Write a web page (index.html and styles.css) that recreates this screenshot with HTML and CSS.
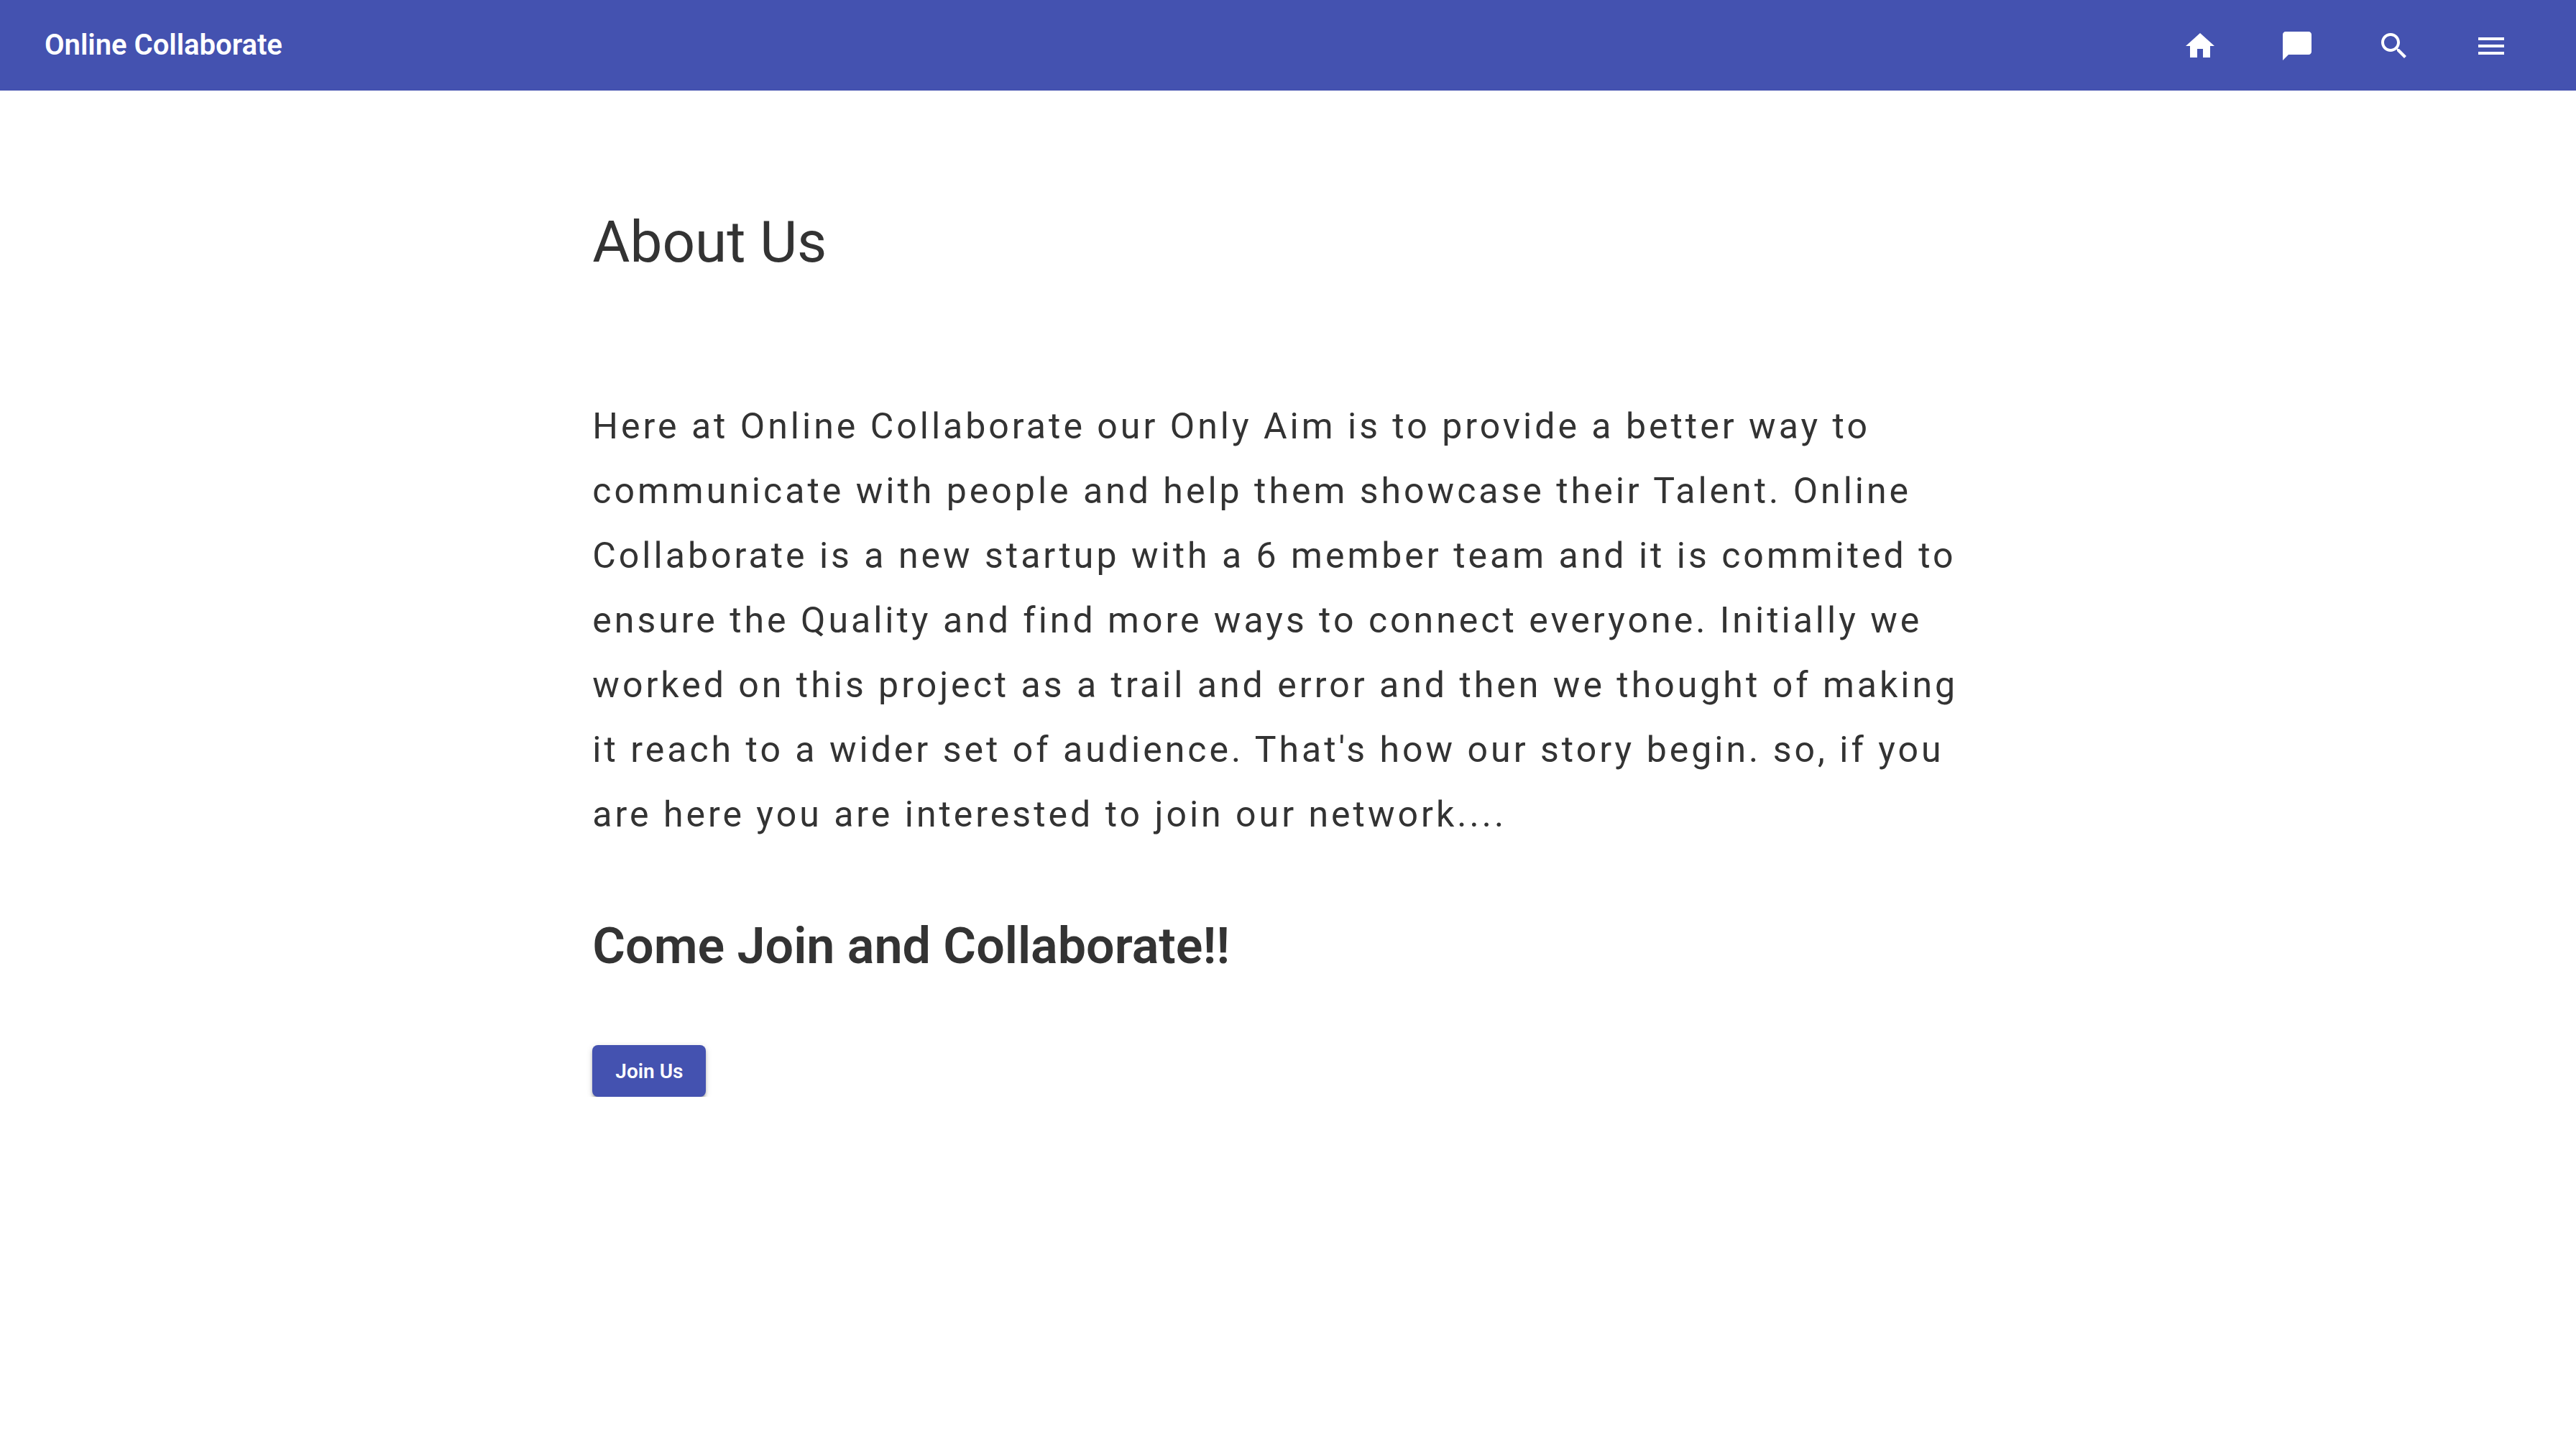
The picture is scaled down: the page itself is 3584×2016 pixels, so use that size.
FILE: index.html
```html
<!DOCTYPE html>
<html lang="en">
<head>
<meta charset="utf-8">
<title>Online Collaborate</title>
<link rel="stylesheet" href="styles.css">
</head>
<body>
<header class="toolbar">
  <a class="brand" href="#">Online Collaborate</a>
  <nav class="actions" aria-label="Main">
    <button class="icon-button" type="button" aria-label="Home"><svg viewBox="0 0 24 24"><path d="M10 20v-6h4v6h5v-8h3L12 3 2 12h3v8z"/></svg></button>
    <button class="icon-button" type="button" aria-label="Messages"><svg viewBox="0 0 24 24"><path d="M20 2H4c-1.100 0-2 .9-2 2v18l4-4h14c1.100 0 2-.9 2-2V4c0-1.100-.9-2-2-2z"/></svg></button>
    <button class="icon-button" type="button" aria-label="Search"><svg viewBox="0 0 24 24"><path d="M15.500 14h-.79l-.28-.27C15.410 12.590 16 11.110 16 9.500 16 5.910 13.090 3 9.500 3S3 5.910 3 9.500 5.910 16 9.500 16c1.610 0 3.090-.59 4.230-1.570l.27.28v.79l5 4.990L20.490 19l-4.990-5zm-6 0C7.010 14 5 11.990 5 9.500S7.010 5 9.500 5 14 7.010 14 9.500 11.990 14 9.500 14z"/></svg></button>
    <button class="icon-button" type="button" aria-label="Menu"><svg viewBox="0 0 24 24"><path d="M3 18h18v-2H3v2zm0-5h18v-2H3v2zm0-7v2h18V6H3z"/></svg></button>
  </nav>
</header>
<main class="about">
  <h1 class="title">About Us</h1>
  <p class="story">Here at Online Collaborate our Only Aim is to provide a better way to communicate with people and help them showcase their Talent. Online Collaborate is a new startup with a 6 member team and it is commited to ensure the Quality and find more ways to connect everyone. Initially we worked on this project as a trail and error and then we thought of making it reach to a wider set of audience. That's how our story begin. so, if you are here you are interested to join our network....</p>
  <h2 class="invite">Come Join and Collaborate!!</h2>
  <button class="join" type="button">Join Us</button>
</main>
</body>
</html>
```
FILE: styles.css
```css
* {
  box-sizing: border-box;
}

body {
  margin: 0;
  background: #fff;
  color: #333;
  font-family: Roboto, "Liberation Sans", sans-serif;
}

.toolbar {
  display: flex;
  align-items: center;
  justify-content: space-between;
  height: 126px;
  padding: 0 70px 0 62px;
  background: #4452b0;
}

.brand {
  color: #fff;
  font-size: 40px;
  font-weight: 600;
  line-height: 64px;
  text-decoration: none;
}

.actions {
  display: flex;
  gap: 39px;
  padding-top: 2px;
}

.icon-button {
  display: flex;
  align-items: center;
  justify-content: center;
  width: 96px;
  height: 96px;
  padding: 0;
  border: 0;
  background: none;
  color: #fff;
  cursor: pointer;
}

.icon-button svg {
  width: 48px;
  height: 48px;
  fill: currentColor;
}

.about {
  width: 54%;
  margin: 0 auto;
  padding-top: 156px;
}

.title {
  margin: 0;
  font-size: 80px;
  font-weight: 400;
  line-height: 110px;
}

.story {
  margin: 156px 0 0;
  font-size: 50px;
  letter-spacing: 4px;
  line-height: 90px;
}

.invite {
  margin: 92px 0 0;
  font-size: 70px;
  font-weight: 600;
  line-height: 92px;
}

.join {
  display: block;
  margin: 92px 0 0;
  height: 72px;
  padding: 2px 32px 0;
  border: 0;
  border-radius: 8px;
  background: #4452b0;
  box-shadow: 0 6px 4px -4px rgba(0, 0, 0, 0.3), 0 4px 4px rgba(0, 0, 0, 0.2), 0 2px 10px rgba(0, 0, 0, 0.14);
  color: #fff;
  font-family: inherit;
  font-size: 28px;
  font-weight: 600;
  line-height: 70px;
  cursor: pointer;
}
```
